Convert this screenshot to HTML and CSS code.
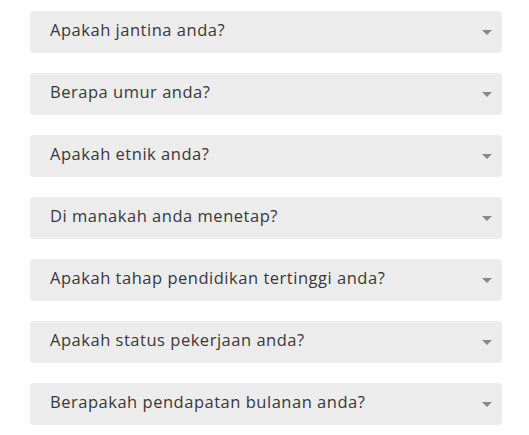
FILE: index.html
```html
<!DOCTYPE html>
<html>
<head>
<meta charset="utf-8">
<link rel="stylesheet" href="styles.css">
</head>
<body>
<div class="form">
  <div class="select"><span class="label">Apakah jantina anda?</span><span class="caret"></span></div>
  <div class="select"><span class="label">Berapa umur anda?</span><span class="caret"></span></div>
  <div class="select"><span class="label">Apakah etnik anda?</span><span class="caret"></span></div>
  <div class="select"><span class="label">Di manakah anda menetap?</span><span class="caret"></span></div>
  <div class="select"><span class="label">Apakah tahap pendidikan tertinggi anda?</span><span class="caret"></span></div>
  <div class="select"><span class="label">Apakah status pekerjaan anda?</span><span class="caret"></span></div>
  <div class="select"><span class="label">Berapakah pendapatan bulanan anda?</span><span class="caret"></span></div>
</div>
</body>
</html>
```

FILE: styles.css
```css
html, body {
  margin: 0;
  padding: 0;
  background: #ffffff;
}
.form {
  display: flex;
  flex-direction: column;
  gap: 20px;
  padding: 11px 0 0 30px;
  width: 472px;
}
.select {
  height: 42px;
  box-sizing: border-box;
  background: #ececec;
  border-radius: 4px;
  display: flex;
  align-items: center;
  justify-content: space-between;
  padding: 0 10px 4px 20px;
}
.label {
  font-family: "Open Sans", sans-serif;
  font-size: 16.5px;
  line-height: 20px;
  color: #383838;
  letter-spacing: 0.52px;
}
.caret {
  width: 0;
  height: 0;
  margin-top: 4px;
  border-left: 5px solid transparent;
  border-right: 5px solid transparent;
  border-top: 5px solid #888888;
}
```
